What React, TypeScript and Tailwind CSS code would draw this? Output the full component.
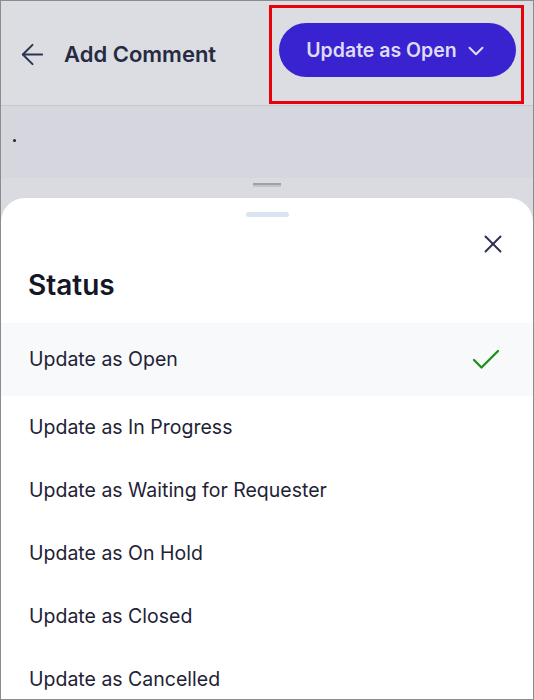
import { ArrowLeft, ChevronDown, X, Check } from "lucide-react";

export default function App() {
  const items = [
    "Update as In Progress",
    "Update as Waiting for Requester",
    "Update as On Hold",
    "Update as Closed",
    "Update as Cancelled",
  ];
  return (
    <div className="relative w-[534px] h-[700px] overflow-hidden border border-[#8c8c8c] bg-white flex flex-col font-[family-name:Inter,sans-serif]">
      {/* Header */}
      <div className="h-[105px] shrink-0 bg-[#dcdde3] border-b border-[#c6c7ce] flex items-start">
        <div className="h-[54px] mt-[26px] ml-[15px] flex items-center gap-[15px]">
          <ArrowLeft size={33} strokeWidth={1.45} color="#2d3250" />
          <span className="text-[22px] font-semibold text-[#262b42]">Add Comment</span>
        </div>
        <button className="ml-auto mr-[17px] mt-[22px] w-[237px] h-[54px] rounded-full bg-[#3922cf] flex items-center justify-center gap-[6px] pt-[2px]">
          <span className="text-[19.5px] font-semibold text-[#dedcf6]">Update as Open</span>
          <ChevronDown size={26} strokeWidth={1.9} color="#dedcf6" />
        </button>
      </div>
      {/* Comment area */}
      <div className="h-[72px] shrink-0 bg-[#d6d7de] pl-[12px] pt-[33px]">
        <div className="w-[3px] h-[3px] rounded-full bg-[#222]" />
      </div>
      {/* Sheet wrapper */}
      <div className="flex-1 flex flex-col bg-[#dadbe0]">
        <div className="h-[20px] shrink-0 flex justify-center pt-[5px]">
          <div className="w-[28px] h-[4px] flex flex-col">
            <div className="h-[2px] bg-[#9fa0a7]" />
            <div className="h-[2px] bg-[#c3c4ca]" />
          </div>
        </div>
        <div className="flex-1 bg-white rounded-t-[24px] flex flex-col">
          <div className="flex justify-center pt-[14px]">
            <div className="w-[43px] h-[5px] rounded-full bg-[#dbe4f1]" />
          </div>
          <div className="flex justify-end pr-[25px] mt-[12px]">
            <X size={30} strokeWidth={1.6} color="#2d3250" />
          </div>
          <div className="mt-[12px] pl-[27px] text-[28px] leading-[28px] font-semibold text-[#131726]">Status</div>
          <div className="mt-[24px] flex flex-col">
            <div className="h-[73px] bg-[#f7f9fb] flex items-center justify-between pl-[28px] pr-[29px]">
              <span className="text-[19.5px] text-[#1e2235]">Update as Open</span>
              <Check size={36} strokeWidth={1.55} color="#1f8f1f" />
            </div>
            {items.map((t) => (
              <div key={t} className="h-[63px] flex items-center pl-[28px]">
                <span className="text-[19.5px] text-[#1e2235]">{t}</span>
              </div>
            ))}
          </div>
        </div>
      </div>
      {/* Highlight annotation */}
      <div className="absolute left-[268px] top-[4px] w-[255px] h-[99px] border-[3px] border-[#e8000b]" />
    </div>
  );
}
